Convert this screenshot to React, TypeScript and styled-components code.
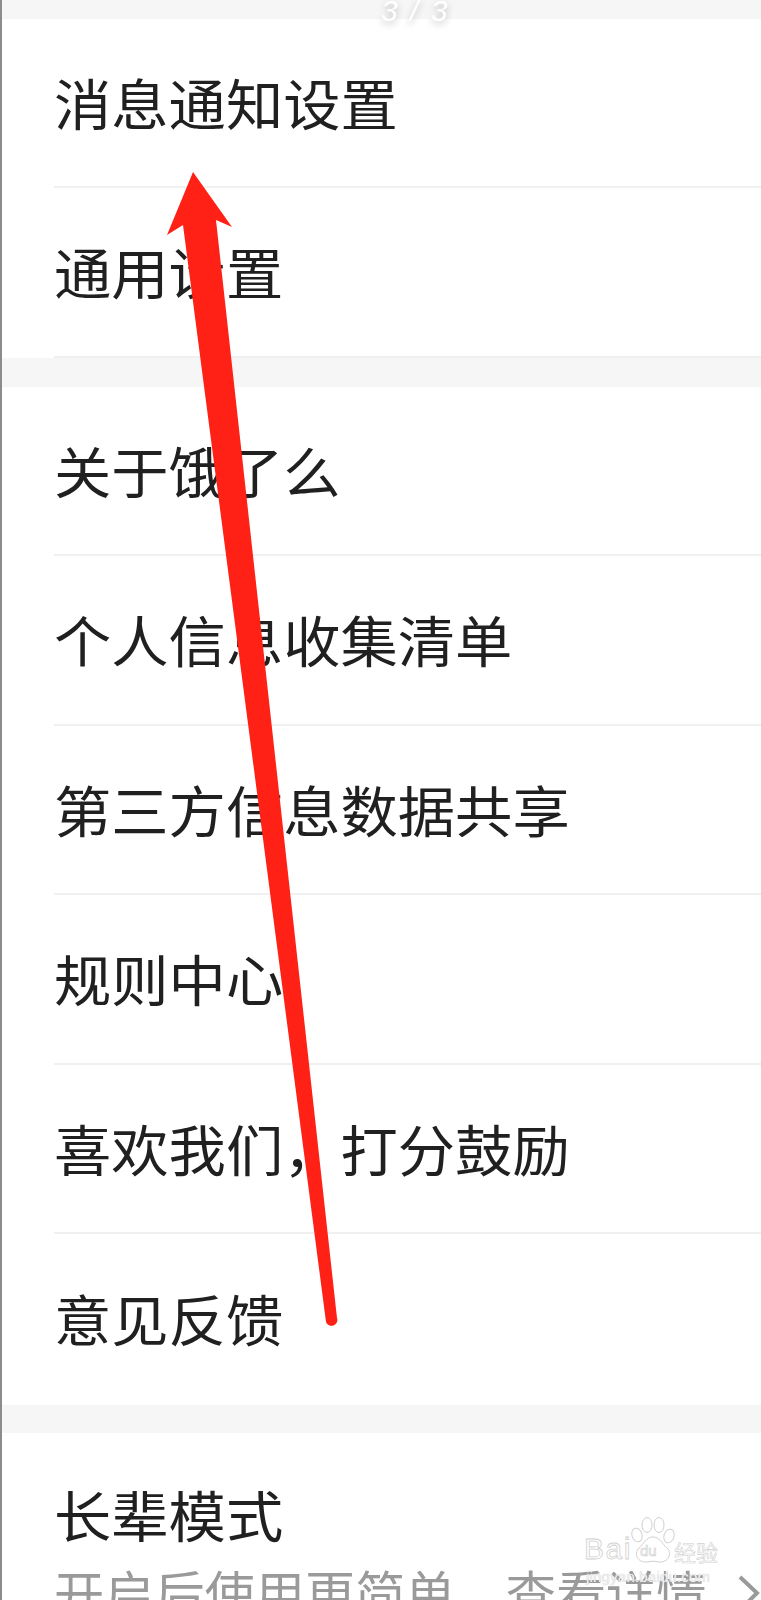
import React from "react";
import styled, { createGlobalStyle } from "styled-components";

const Global = createGlobalStyle`
  html, body { margin: 0; padding: 0; background: #fff; }
  body { width: 761px; height: 1600px; overflow: hidden; }
  #root { width: 761px; height: 1600px; }
`;

const Page = styled.div`
  position: relative;
  width: 761px;
  height: 1600px;
  overflow: hidden;
  box-sizing: border-box;
  border-left: 2px solid #8c8c8c;
  background: #fff;
  font-family: "Noto Sans CJK SC", "Liberation Sans", sans-serif;
`;

const Band = styled.div<{ $h: number }>`
  height: ${(p) => p.$h}px;
  background: #f6f6f6;
`;

const Section = styled.section<{ $pb?: number }>`
  display: flex;
  flex-direction: column;
  padding-left: 52px;
  padding-bottom: ${(p) => p.$pb ?? 0}px;
  background: #fff;
`;

const Row = styled.div<{ $h: number; $last?: boolean }>`
  display: flex;
  align-items: center;
  height: ${(p) => p.$h}px;
  box-sizing: border-box;
  border-bottom: ${(p) => (p.$last ? "none" : "2px solid #f0f0f0")};
`;

const Label = styled.span`
  display: block;
  font-size: 57.3px;
  line-height: 1;
  color: #202020;
  white-space: pre;
  transform: translateY(-1px) scaleY(0.96);
  filter: blur(0.4px);
`;

const ElderBlock = styled.div`
  display: flex;
  flex-direction: column;
  padding-top: 53px;
`;

const SubRow = styled.div`
  display: flex;
  align-items: center;
  margin-top: 22px;
  height: 50px;
`;

const SubText = styled.span`
  font-size: 50.2px;
  line-height: 1;
  color: #9a9a9a;
  white-space: pre;
  filter: blur(0.4px);
`;

const Chevron = styled.svg`
  position: absolute;
  left: 734px;
  top: 1574px;
  width: 24px;
  height: 26px;
`;

const Counter = styled.div`
  position: absolute;
  left: 379px;
  top: -8px;
  font-family: "Liberation Sans", sans-serif;
  font-size: 30px;
  line-height: 38px;
  font-style: italic;
  letter-spacing: 2px;
  color: #fff;
  text-shadow: 0 3px 7px rgba(0, 0, 0, 0.25);
  white-space: pre;
`;

const Arrow = styled.svg`
  position: absolute;
  left: -2px;
  top: 0;
  width: 761px;
  height: 1600px;
  pointer-events: none;
`;

const Watermark = styled.div`
  position: absolute;
  left: 582px;
  top: 1516px;
  width: 140px;
  height: 68px;
  color: #fff;
`;

const Paw = styled.svg`
  position: absolute;
  left: 46px;
  top: 0;
  width: 46px;
  height: 48px;
`;

const MarkBai = styled.span`
  position: absolute;
  left: 0;
  top: 17px;
  font-family: "Liberation Sans", sans-serif;
  font-size: 30px;
  line-height: 32px;
  letter-spacing: 1.5px;
  color: #fff;
  -webkit-text-stroke: 0.8px #d0d0d0;
`;

const MarkDu = styled.span`
  position: absolute;
  left: 56px;
  top: 26px;
  font-family: "Liberation Sans", sans-serif;
  font-size: 15px;
  line-height: 18px;
  color: #fff;
  -webkit-text-stroke: 0.6px #cccccc;
`;

const MarkJy = styled.span`
  position: absolute;
  left: 90px;
  top: 22px;
  font-size: 22px;
  line-height: 26px;
  color: #fff;
  -webkit-text-stroke: 0.6px #d0d0d0;
  white-space: pre;
`;

const MarkUrl = styled.span`
  position: absolute;
  left: 2px;
  top: 53px;
  font-family: "Liberation Sans", sans-serif;
  font-size: 15px;
  line-height: 16px;
  letter-spacing: 0.2px;
  color: #efefef;
  text-shadow: 0 0 1px #c4c4c4;
  white-space: pre;
`;

export default function App() {
  return (
    <>
      <Global />
      <Page>
        <Band $h={19} />
        <Section>
          <Row $h={168.5}>
            <Label>消息通知设置</Label>
          </Row>
          <Row $h={170}>
            <Label>通用设置</Label>
          </Row>
        </Section>
        <Band $h={29.5} />
        <Section $pb={2}>
          <Row $h={169.4}>
            <Label>关于饿了么</Label>
          </Row>
          <Row $h={169.4}>
            <Label>个人信息收集清单</Label>
          </Row>
          <Row $h={169.4}>
            <Label>第三方信息数据共享</Label>
          </Row>
          <Row $h={169.4}>
            <Label>规则中心</Label>
          </Row>
          <Row $h={169.4}>
            <Label>喜欢我们，打分鼓励</Label>
          </Row>
          <Row $h={169.4} $last>
            <Label>意见反馈</Label>
          </Row>
        </Section>
        <Band $h={28} />
        <Section>
          <ElderBlock>
            <Label>长辈模式</Label>
            <SubRow>
              <SubText>开启后使用更简单，查看详情</SubText>
            </SubRow>
          </ElderBlock>
        </Section>

        <Chevron viewBox="0 0 24 26" fill="none" stroke="#9a9a9a" strokeWidth="4">
          <path d="M4 3 L21 19 L10 30" />
        </Chevron>

        <Counter>3 / 3</Counter>

        <Watermark>
          <Paw viewBox="0 0 46 48" fill="#fff" stroke="#d0d0d0" strokeWidth="1">
            <ellipse cx="7" cy="19" rx="5" ry="7" transform="rotate(-18 7 19)" />
            <ellipse cx="17" cy="9" rx="5" ry="7.5" />
            <ellipse cx="29" cy="9" rx="5" ry="7.5" />
            <ellipse cx="39" cy="20" rx="5" ry="7" transform="rotate(18 39 20)" />
            <path d="M23 21 C30 21 32 28 37 32 C43 37 38 47 29 46 C25 45 21 45 17 46 C8 47 3 38 9 32 C14 28 16 21 23 21 Z" />
          </Paw>
          <MarkBai>Bai</MarkBai>
          <MarkDu>du</MarkDu>
          <MarkJy>经验</MarkJy>
          <MarkUrl>jingyan.baidu.com</MarkUrl>
        </Watermark>

        <Arrow viewBox="0 0 761 1600">
          <path
            d="M193 172 L232 227 L216 220 L337 1318 A5.5 5.5 0 0 1 326 1322 L183 225 L167 235 Z"
            fill="#ff2116"
          />
        </Arrow>
      </Page>
    </>
  );
}
